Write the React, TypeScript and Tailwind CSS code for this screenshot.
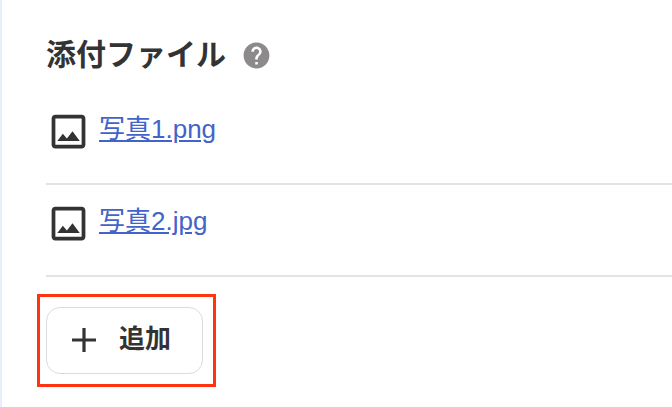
const jp = { fontFamily: '"Liberation Sans", "Noto Sans CJK JP", sans-serif' };

function ImageIcon() {
  return (
    <svg viewBox="0 0 24 24" className="w-[45px] h-[45px] shrink-0 fill-[#333333]">
      <path d="M19 5v14H5V5h14m0-2H5c-1.1 0-2 .9-2 2v14c0 1.1.9 2 2 2h14c1.1 0 2-.9 2-2V5c0-1.1-.9-2-2-2zm-4.86 8.86l-3 3.87L9 13.14 6 17h12l-3.86-5.14z" />
    </svg>
  );
}

function FileRow({ name }: { name: string }) {
  return (
    <div className="h-[92px] flex items-center border-b-2 border-[#e3e3e3] pb-[14px]">
      <ImageIcon />
      <a href="#" className="ml-[8px] mb-[4px] text-[26px] text-[#4263c9] underline leading-none">{name}</a>
    </div>
  );
}

export default function App() {
  return (
    <div style={jp} className="w-[672px] h-[407px] overflow-hidden bg-white border-l-[2px] border-[#e8eefc] pl-[44px] pt-[36px]">
      <div className="flex items-center h-[38px]">
        <h2 className="text-[30px] font-bold text-[#333333] leading-none">添付ファイル</h2>
        <svg viewBox="0 0 24 24" className="w-[31px] h-[31px] ml-[15px] fill-[#8c8a8a]">
          <path d="M12 2C6.48 2 2 6.48 2 12s4.48 10 10 10 10-4.48 10-10S17.52 2 12 2zm1 17h-2v-2h2v2zm2.07-7.75l-.9.92C13.45 12.9 13 13.5 13 15h-2v-.5c0-1.1.45-2.1 1.17-2.83l1.24-1.26c.37-.36.59-.86.59-1.41 0-1.1-.9-2-2-2s-2 .9-2 2H8c0-2.21 1.79-4 4-4s4 1.79 4 4c0 .88-.36 1.68-.93 2.25z" />
        </svg>
      </div>
      <div className="mt-[19px]">
        <FileRow name="写真1.png" />
        <FileRow name="写真2.jpg" />
      </div>
      <div className="relative mt-[30px] w-[157px]">
        <button className="w-[157px] h-[67px] flex items-center rounded-[14px] border border-[#dcdcdc] bg-white pl-[21px] pb-[2px] text-[#333333]">
          <svg viewBox="0 0 24 24" className="w-[32px] h-[32px] fill-[#333333]">
            <path d="M13.2 3h-2.4v7.8H3v2.4h7.8V21h2.4v-7.8H21v-2.4h-7.8z" />
          </svg>
          <span className="ml-[19px] mb-[2px] text-[26px] font-bold leading-none">追加</span>
        </button>
        <div className="absolute left-[-9px] top-[-13px] w-[179px] h-[93px] border-[3px] border-[#ff3310]" />
      </div>
    </div>
  );
}
